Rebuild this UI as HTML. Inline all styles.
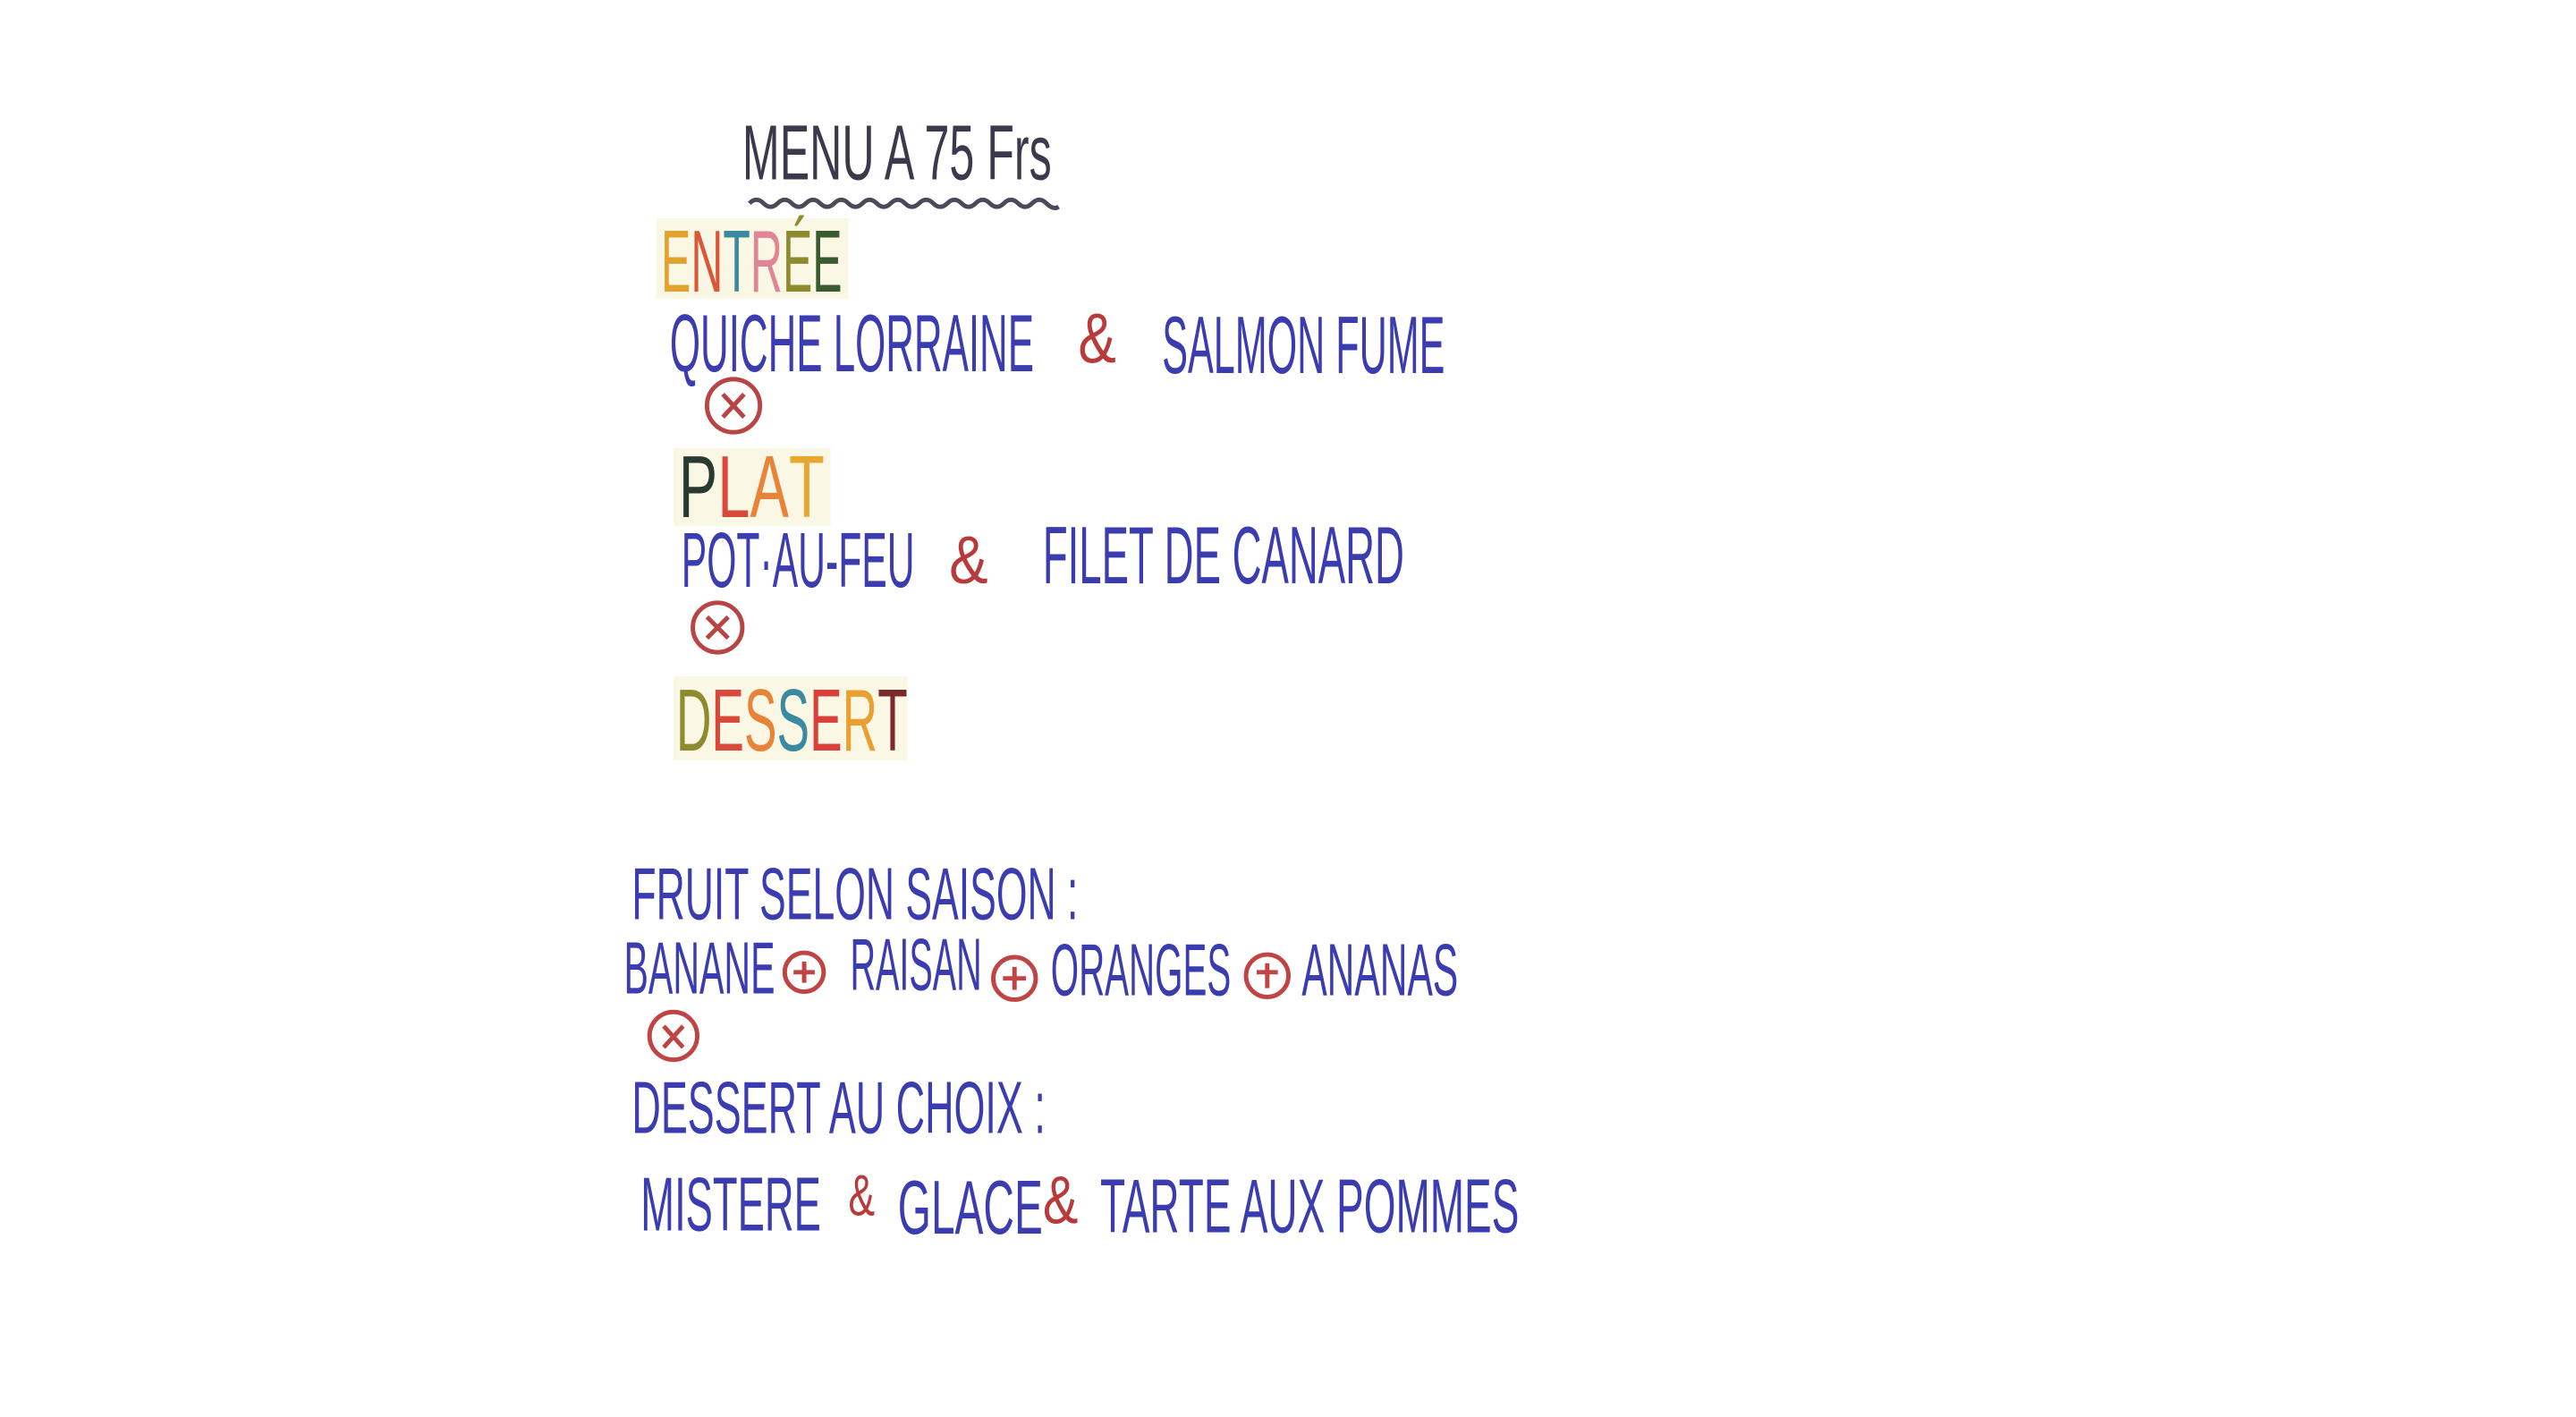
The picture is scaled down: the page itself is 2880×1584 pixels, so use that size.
<!DOCTYPE html>
<html><head><meta charset="utf-8"><style>
html,body{margin:0;padding:0;background:#fff;width:2880px;height:1584px;overflow:hidden}
svg{display:block}
text{font-family:"Liberation Sans",sans-serif}
.b{fill:#3b3cb0}
.r{fill:#b83a3a}
</style></head><body>
<svg width="2880" height="1584" viewBox="0 0 2880 1584">
<g transform="scale(0.988)">
<!-- title -->
<text x="840" y="203" font-size="88" fill="#3a3a4c" textLength="350" lengthAdjust="spacingAndGlyphs">MENU A 75 Frs</text>
<path d="M848 230 q8 -8 16 0 t16 0 t16 0 t16 0 t16 0 t16 0 t16 0 t16 0 t16 0 t16 0 t16 0 t16 0 t16 0 t16 0 t16 0 t16 0 t16 0 t16 0 t16 0 t16 0 t16 0 t14 4" stroke="#4a4a5a" stroke-width="5" fill="none"/>

<!-- ENTREE -->
<rect x="743" y="247" width="217" height="91" fill="#faf7e4"/>
<text x="748" y="330" font-size="100" textLength="205" lengthAdjust="spacingAndGlyphs"><tspan fill="#e2a22e">E</tspan><tspan fill="#d9583a">N</tspan><tspan fill="#3a8aa0">T</tspan><tspan fill="#e08595">R</tspan><tspan fill="#8e8a2e">É</tspan><tspan fill="#3a5a30">E</tspan></text>

<text class="b" x="758" y="420" font-size="92" textLength="412" lengthAdjust="spacingAndGlyphs">QUICHE LORRAINE</text>
<text class="r" x="1220" y="410" font-size="80" textLength="43" lengthAdjust="spacingAndGlyphs">&amp;</text>
<text class="b" x="1315" y="422" font-size="92" textLength="320" lengthAdjust="spacingAndGlyphs">SALMON FUME</text>
<g stroke="#b84444" stroke-width="5" fill="none"><circle cx="830" cy="459" r="30"/><path d="M818 446 L842 472 M842 446 L818 472"/></g>

<!-- PLAT -->
<rect x="762" y="507" width="178" height="88" fill="#faf7e4"/>
<text x="768" y="585" font-size="100" textLength="165" lengthAdjust="spacingAndGlyphs"><tspan fill="#2a3a30">P</tspan><tspan fill="#d9483a">L</tspan><tspan fill="#e8843a">A</tspan><tspan fill="#e8a830">T</tspan></text>

<text class="b" x="771" y="664" font-size="88" textLength="264" lengthAdjust="spacingAndGlyphs">POT·AU-FEU</text>
<text class="r" x="1074" y="660" font-size="76" textLength="44" lengthAdjust="spacingAndGlyphs">&amp;</text>
<text class="b" x="1180" y="660" font-size="92" textLength="409" lengthAdjust="spacingAndGlyphs">FILET DE CANARD</text>
<g stroke="#b84444" stroke-width="5" fill="none"><circle cx="812" cy="710" r="28"/><path d="M800 698 L824 722 M824 698 L800 722"/></g>

<!-- DESSERT -->
<rect x="762" y="765" width="265" height="95" fill="#faf7e4"/>
<text x="765" y="849" font-size="100" textLength="262" lengthAdjust="spacingAndGlyphs"><tspan fill="#8e8a2e">D</tspan><tspan fill="#d9483a">E</tspan><tspan fill="#e8843a">S</tspan><tspan fill="#3a8aa0">S</tspan><tspan fill="#d9403a">E</tspan><tspan fill="#e8a030">R</tspan><tspan fill="#7a2a2a">T</tspan></text>

<text class="b" x="715" y="1040" font-size="84" textLength="505" lengthAdjust="spacingAndGlyphs">FRUIT SELON SAISON :</text>

<text class="b" x="706" y="1124" font-size="84" textLength="171" lengthAdjust="spacingAndGlyphs">BANANE</text>
<text class="b" x="962" y="1120" font-size="84" textLength="149" lengthAdjust="spacingAndGlyphs">RAISAN</text>
<text class="b" x="1189" y="1126" font-size="84" textLength="204" lengthAdjust="spacingAndGlyphs">ORANGES</text>
<text class="b" x="1473" y="1126" font-size="84" textLength="177" lengthAdjust="spacingAndGlyphs">ANANAS</text>
<g stroke="#c04444" stroke-width="5" fill="none">
<circle cx="910" cy="1100" r="22"/><path d="M910 1088 V1112 M898 1100 H922"/>
<circle cx="1148" cy="1107" r="24"/><path d="M1148 1094 V1120 M1135 1107 H1161"/>
<circle cx="1434" cy="1104" r="24"/><path d="M1434 1090 V1118 M1422 1100 H1446"/>
<circle cx="762" cy="1172" r="27"/><path d="M751 1161 L773 1185 M773 1161 L751 1185"/>
</g>

<text class="b" x="715" y="1282" font-size="84" textLength="468" lengthAdjust="spacingAndGlyphs">DESSERT AU CHOIX :</text>

<text class="b" x="725" y="1392" font-size="86" textLength="204" lengthAdjust="spacingAndGlyphs">MISTERE</text>
<text class="r" x="960" y="1375" font-size="66" textLength="30" lengthAdjust="spacingAndGlyphs">&amp;</text>
<text class="b" x="1016" y="1396" font-size="86" textLength="164" lengthAdjust="spacingAndGlyphs">GLACE</text>
<text class="r" x="1180" y="1384" font-size="76" textLength="40" lengthAdjust="spacingAndGlyphs">&amp;</text>
<text class="b" x="1245" y="1394" font-size="86" textLength="474" lengthAdjust="spacingAndGlyphs">TARTE AUX POMMES</text>
</g>
</svg>
</body></html>
